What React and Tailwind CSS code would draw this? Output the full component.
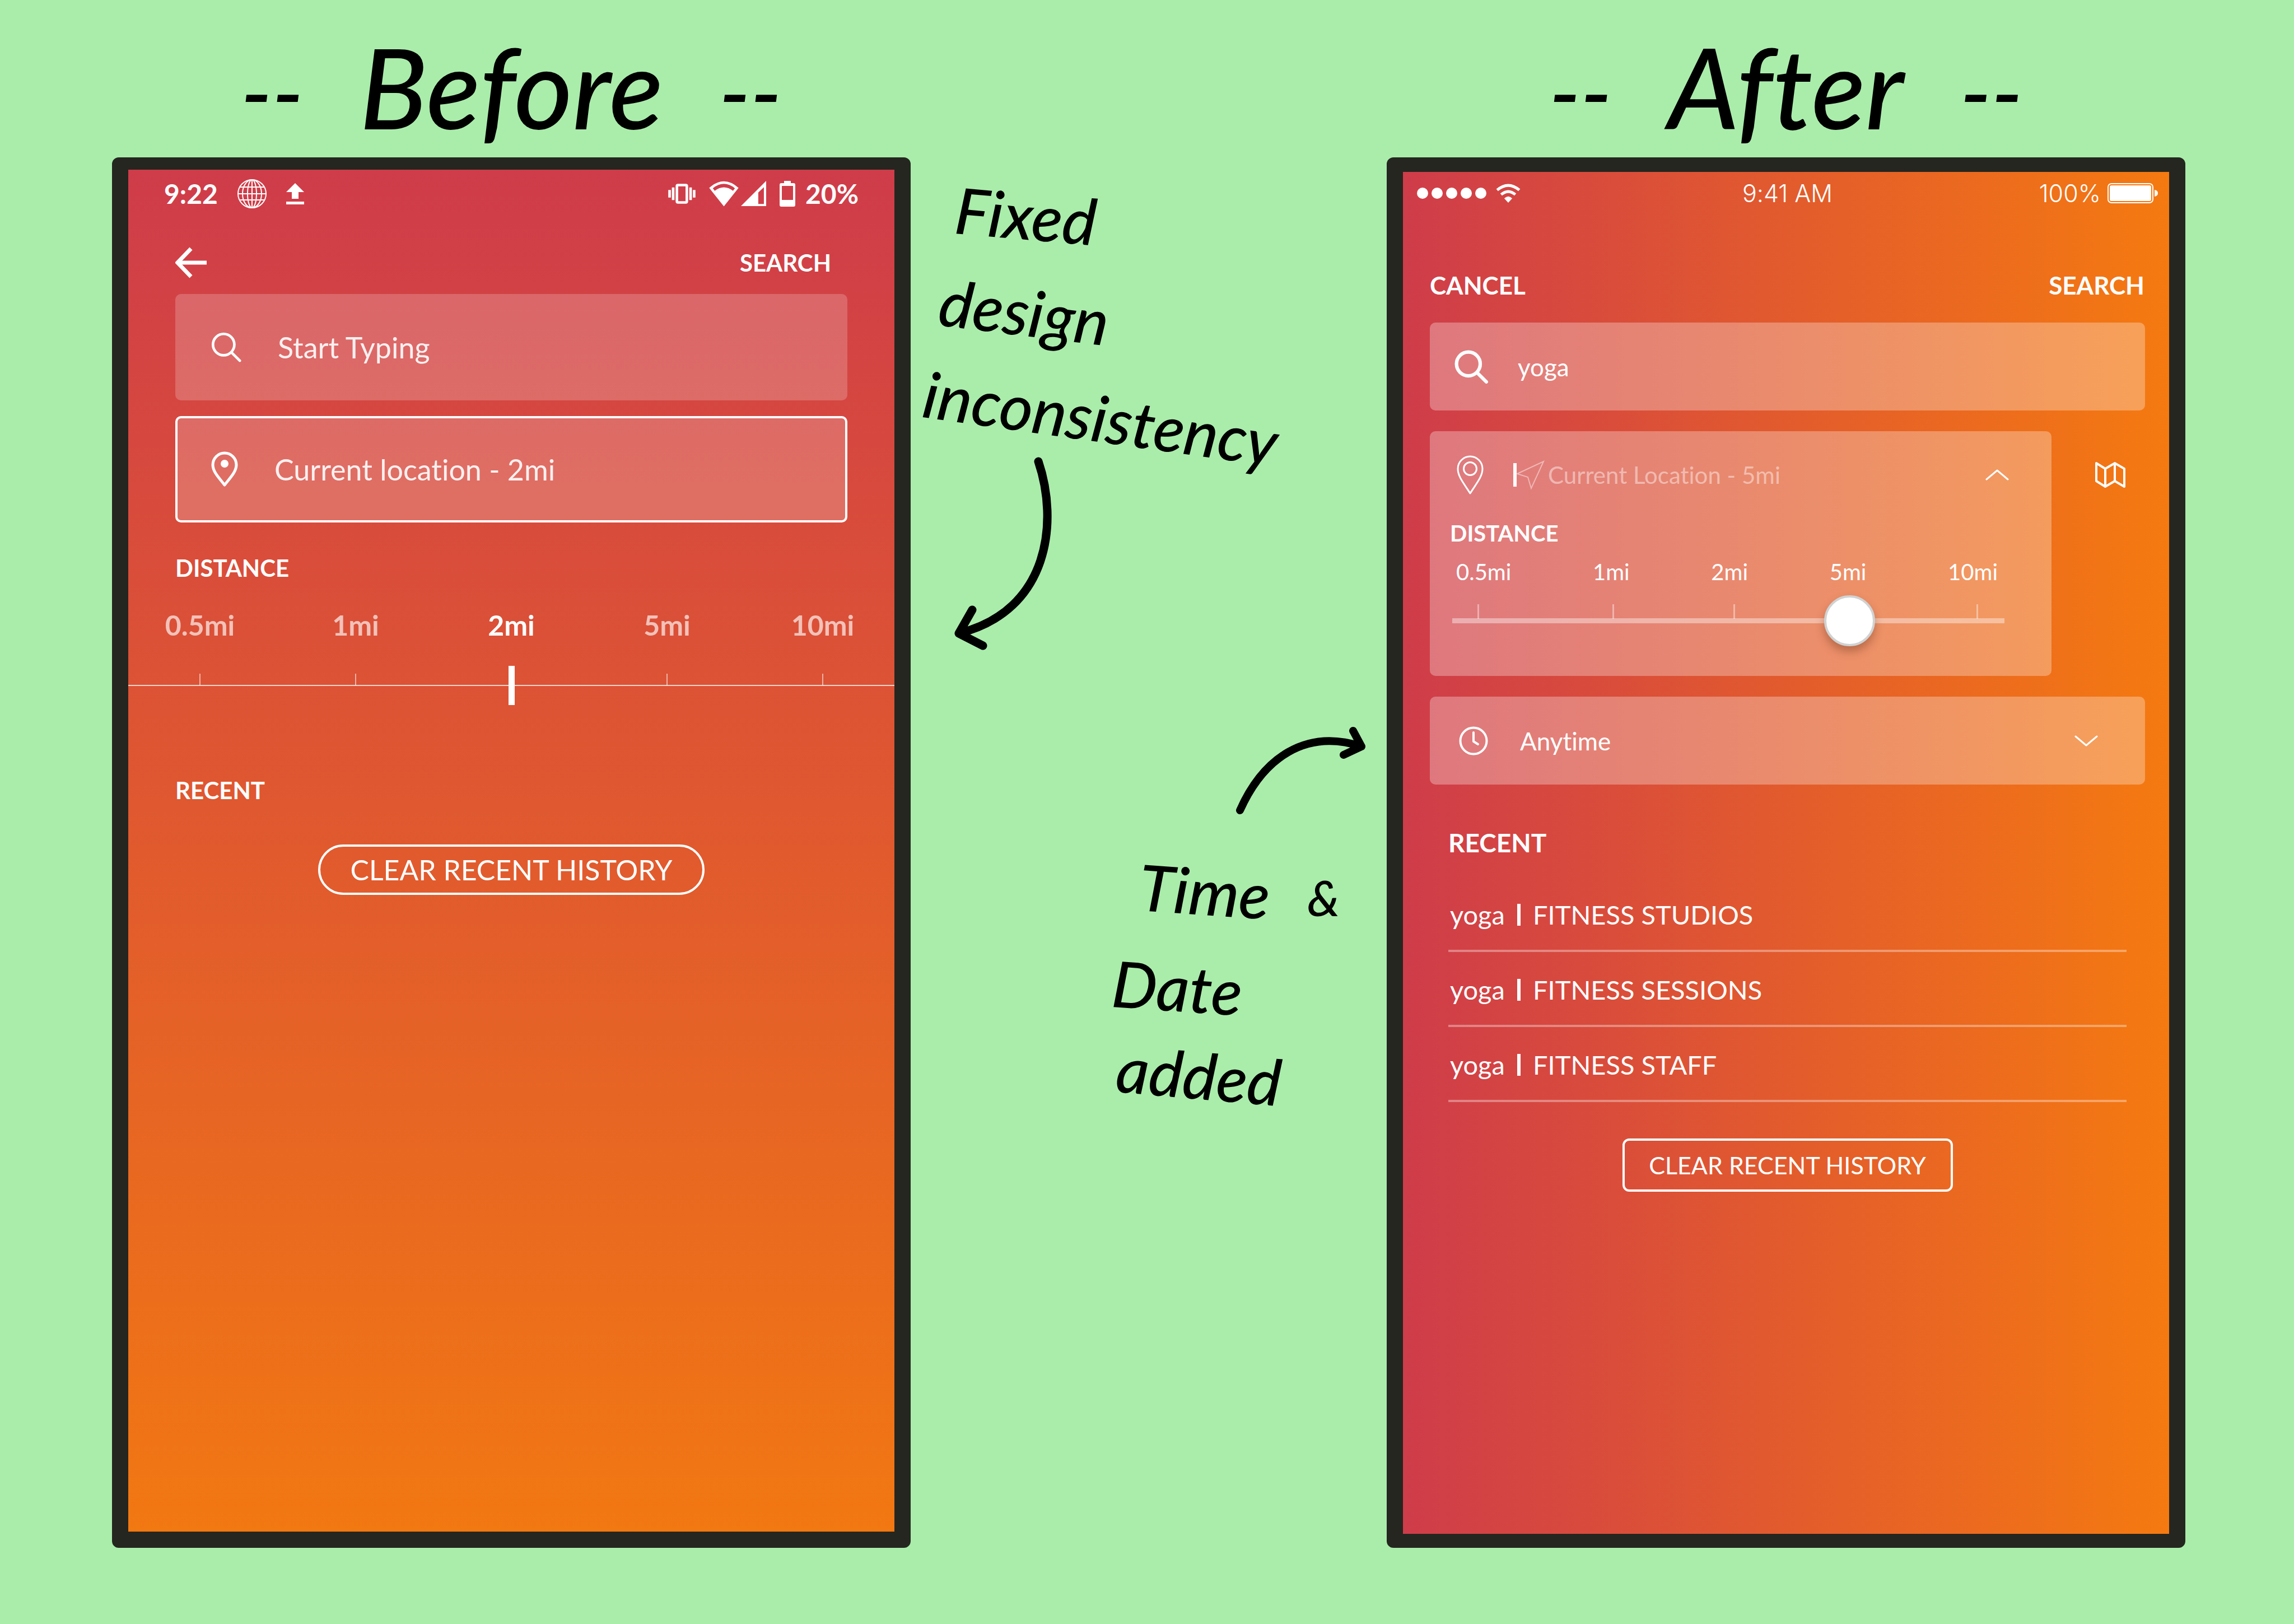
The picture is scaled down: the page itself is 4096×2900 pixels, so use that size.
import React from "react";

const LATO = "font-['Lato','Open_Sans',sans-serif]";

/* ---------- icons ---------- */

function Icon({ box, className, children, width = 4 }) {
  return (
    <svg
      viewBox={box}
      className={`shrink-0 ${className}`}
      fill="none"
      stroke="currentColor"
      strokeWidth={width}
      strokeLinecap="round"
      strokeLinejoin="round"
      aria-hidden="true"
    >
      {children}
    </svg>
  );
}

const Globe = () => (
  <Icon box="0 0 54 54" className="h-[54px] w-[54px]" width={2}>
    <circle cx="27" cy="27" r="25" />
    <ellipse cx="27" cy="27" rx="17" ry="25" />
    <ellipse cx="27" cy="27" rx="8" ry="25" />
    <path d="M27 2v50M2 27h50M6 15h42M6 38h42" />
  </Icon>
);

const Upload = () => (
  <svg viewBox="0 0 32 38" className="h-[38px] w-8 shrink-0" fill="currentColor" aria-hidden="true">
    <path d="M16 0 32 16H22V28H10V16H0ZM0 33H32V38H0Z" />
  </svg>
);

const Vibrate = () => (
  <Icon box="0 0 160 118" className="h-[36px] w-[49px]" width={15}>
    <rect x="51" y="8" width="58" height="102" rx="6" />
    <path d="M29 22V96M131 22V96M8 37V81M152 37V81" strokeLinecap="butt" />
  </Icon>
);

const WifiFan = () => (
  <svg viewBox="0 0 172 148" className="h-[46px] w-[53px]" fill="currentColor" aria-hidden="true">
    <path fillRule="evenodd" d="M1 40Q86-36 171 40L86 147ZM22 42 33 57Q86 17 139 57L150 42Q86-9 22 42Z" />
  </svg>
);

const Signal = () => (
  <svg viewBox="0 0 144 144" className="h-[45px] w-[45px]" fill="currentColor" aria-hidden="true">
    <path fillRule="evenodd" d="M144 0V144H0ZM131 36 99 66V132H131Z" />
  </svg>
);

const BatteryUpright = () => (
  <svg viewBox="0 0 28 46" className="h-[46px] w-7 shrink-0" fill="currentColor" aria-hidden="true">
    <path fillRule="evenodd" d="M8 0H20V4H25Q28 4 28 7V43Q28 46 25 46H3Q0 46 0 43V7Q0 4 3 4H8ZM4 9V34H24V9Z" />
  </svg>
);

const BackArrow = () => (
  <Icon box="0 0 56 56" className="h-14 w-14" width={7}>
    <path d="M28 3 4 28 28 53M5 28H56" strokeLinecap="butt" strokeLinejoin="miter" />
  </Icon>
);

const Search = ({ className, width }) => (
  <Icon box="0 0 58 58" className={className} width={width}>
    <circle cx="24" cy="24" r="20.5" />
    <path d="M39 39 55 55" />
  </Icon>
);

const PinDot = () => (
  <Icon box="0 0 48 64" className="h-16 w-12" width={5}>
    <path d="M24 60C13 46 3 36 3 24a21 21 0 0 1 42 0C45 36 35 46 24 60Z" />
    <circle cx="24" cy="22" r="7" fill="currentColor" stroke="none" />
  </Icon>
);

const PinRing = () => (
  <Icon box="0 0 60 70" className="h-[70px] w-[60px]" width={3}>
    <path d="M30 68C18 49 8 38 8 24a22 22 0 0 1 44 0C52 38 42 49 30 68Z" />
    <circle cx="30" cy="24" r="11.5" />
  </Icon>
);

const LocationArrow = () => (
  <Icon box="0 0 52 54" className="h-[54px] w-[52px] text-white/45" width={2}>
    <path d="M48 3 26 51 20 31 1 25Z" strokeLinejoin="miter" />
  </Icon>
);

const Chevron = ({ up }) => (
  <Icon box="0 0 42 22" className="pointer-events-none h-[22px] w-[42px]" width={3}>
    <path d={up ? "M2 19 21 3 40 19" : "M2 3 21 19 40 3"} />
  </Icon>
);

const MapFold = () => (
  <Icon box="0 0 54 46" className="h-[46px] w-[54px]" width={4}>
    <path d="M2 2 18 12 35 2 52 12V44L35 34 18 44 2 34ZM18 12V44M35 2V34" />
  </Icon>
);

const Clock = () => (
  <Icon box="0 0 60 52" className="h-[52px] w-[60px]" width={4}>
    <circle cx="30" cy="26" r="23.5" />
    <path d="M30 11V27L38 32" />
  </Icon>
);

const WifiArcs = () => (
  <svg viewBox="0 0 142 110" className="h-[34px] w-[44px]" aria-hidden="true">
    <path d="M7 37Q71-17 135 37M30 63Q71 28 112 63" fill="none" stroke="currentColor" strokeWidth="16" />
    <path d="M71 110 48 85Q71 62 94 85Z" fill="currentColor" />
  </svg>
);

const BatteryFull = () => (
  <svg viewBox="0 0 90 36" className="h-9 w-[90px]" aria-hidden="true">
    <rect x="1" y="1" width="80" height="34" rx="6" fill="none" stroke="currentColor" strokeWidth="2" />
    <rect x="4" y="4" width="74" height="28" rx="3" fill="currentColor" />
    <path d="M84 12Q90 13 90 18T84 24Z" fill="currentColor" />
  </svg>
);

/* ---------- left phone ---------- */

function BeforePhone() {
  const marks = ["0.5mi", "1mi", "2mi", "5mi", "10mi"];
  return (
    <section className="rounded-xl border-x-[29px] border-t-[22px] border-b-[29px] border-[#25261f] bg-linear-to-b/srgb from-[#cf3c4a] to-[#f27812] text-white">
      <div className="flex h-[86px] items-center justify-between px-[64px] text-[48px] leading-[60px] font-bold">
        <div className="flex items-center gap-[34px]">
          <span>9:22</span>
          <Globe />
          <Upload />
        </div>
        <div className="flex items-center gap-[24px]">
          <Vibrate />
          <span className="flex gap-[4px]">
            <WifiFan />
            <Signal />
          </span>
          <span className="flex items-center gap-[18px]">
            <BatteryUpright />
            20%
          </span>
        </div>
      </div>

      <header className="mt-[50px] flex h-[60px] items-center justify-between pr-[113px] pl-[84px]">
        <button type="button" aria-label="Back">
          <BackArrow />
        </button>
        <button type="button" className="text-[42px] leading-[60px] font-bold">SEARCH</button>
      </header>

      <div className="mt-[26px] flex flex-col gap-[28px] px-[84px]">
        <label className="flex h-[190px] items-center gap-[65px] rounded-[10px] bg-white/20 pl-[64px]">
          <Search className="h-[54px] w-[54px]" width={5} />
          <input
            aria-label="Search"
            placeholder="Start Typing"
            className="min-w-0 flex-1 bg-transparent text-[52px] leading-[60px] outline-none placeholder:text-white/90"
          />
        </label>
        <label className="flex h-[190px] items-center gap-[65px] rounded-[10px] border-4 border-white bg-white/20 pl-[60px]">
          <PinDot />
          <input
            aria-label="Location"
            placeholder="Current location - 2mi"
            className="min-w-0 flex-1 bg-transparent text-[52px] leading-[60px] outline-none placeholder:text-white/90"
          />
        </label>
      </div>

      <h2 className="mt-[51px] px-[84px] text-[42px] leading-[60px] font-bold">DISTANCE</h2>
      <div className="mt-[42px] flex justify-between px-[60px] text-[50px] leading-[60px] font-bold">
        {marks.map((m) => (
          <span key={m} className={m === "2mi" ? "w-[136px] text-center" : "w-[136px] text-center text-white/65"}>
            {m}
          </span>
        ))}
      </div>
      <div className="mt-[43px] grid h-[70px]">
        <div className="col-start-1 row-start-1 flex justify-between px-[127px] pt-[14px]">
          {marks.map((m) => (
            <span key={m} className={m === "2mi" ? "h-[21px] w-[2px]" : "h-[21px] w-[2px] bg-white/55"} />
          ))}
        </div>
        <input
          type="range"
          min="0"
          max="4"
          defaultValue="2"
          aria-label="Distance"
          className="col-start-1 row-start-1 h-[70px] w-full appearance-none bg-transparent [&::-webkit-slider-runnable-track]:h-[2px] [&::-webkit-slider-runnable-track]:bg-white/75 [&::-webkit-slider-thumb]:-mt-[34px] [&::-webkit-slider-thumb]:h-[70px] [&::-webkit-slider-thumb]:w-[11px] [&::-webkit-slider-thumb]:appearance-none [&::-webkit-slider-thumb]:bg-white"
        />
      </div>

      <h2 className="mt-[122px] px-[84px] text-[42px] leading-[60px] font-bold">RECENT</h2>
      <div className="mt-[67px] flex justify-center">
        <button type="button" className="h-[90px] w-[690px] rounded-full border-4 border-white text-[50px] leading-[60px]">
          CLEAR RECENT HISTORY
        </button>
      </div>
    </section>
  );
}

/* ---------- right phone ---------- */

function AfterPhone() {
  const recent = ["FITNESS STUDIOS", "FITNESS SESSIONS", "FITNESS STAFF"];
  return (
    <section className="rounded-xl border-x-[29px] border-t-[26px] border-b-[25px] border-[#25261f] bg-linear-to-r/srgb from-[#cf3c4a] to-[#f57a10] text-white">
      <div className="grid h-[76px] grid-cols-3 items-center pr-[20px] pl-[25px] font-['Inter','Roboto',sans-serif] text-[43px] leading-[60px] font-light">
        <div className="flex items-center gap-[17px]">
          <span className="flex gap-[6px]">
            {[0, 1, 2, 3, 4].map((d) => (
              <span key={d} className="h-[20px] w-[20px] rounded-full bg-white" />
            ))}
          </span>
          <WifiArcs />
        </div>
        <span className="text-center">9:41 AM</span>
        <div className="flex items-center justify-end gap-[12px]">
          100%
          <BatteryFull />
        </div>
      </div>

      <header className="mt-[96px] flex justify-between pr-[44px] pl-[48px] text-[44px] leading-[60px] font-bold">
        <button type="button">CANCEL</button>
        <button type="button">SEARCH</button>
      </header>

      <div className="mt-[37px] flex flex-col gap-[37px] pr-[43px] pl-[48px] text-[44px] leading-[60px]">
        <label className="flex h-[157px] items-center gap-[53px] rounded-[10px] bg-white/30 pl-[44px]">
          <Search className="h-[60px] w-[60px]" width={6} />
          <input aria-label="Search" defaultValue="yoga" className="min-w-0 flex-1 bg-transparent outline-none" />
        </label>

        <div className="flex">
          <div className="flex-1 rounded-[10px] bg-white/30 pb-[53px]">
            <div className="flex h-[156px] items-center pr-[76px] pl-[42px]">
              <PinRing />
              <span className="ml-[47px] h-[42px] w-[6px] bg-white" />
              <LocationArrow />
              <input
                aria-label="Location"
                placeholder="Current Location - 5mi"
                className="ml-[4px] min-w-0 flex-1 bg-transparent text-[42px] outline-none placeholder:text-white/45"
              />
              <button type="button" aria-label="Collapse location">
                <Chevron up />
              </button>
            </div>
            <h2 className="pl-[36px] text-[40px] leading-[52px] font-bold">DISTANCE</h2>
            <div className="mt-[17px] flex justify-between pr-[96px] pl-[47px] text-[40px] leading-[52px]">
              {["0.5mi", "1mi", "2mi", "5mi", "10mi"].map((m) => (
                <span key={m}>{m}</span>
              ))}
            </div>
            <div className="mt-[16px] mr-[84px] ml-[40px] grid h-[91px]">
              <div className="col-start-1 row-start-1 grid h-[42px] grid-cols-[45fr_241fr_215fr_434fr_50fr] pt-[16px]">
                <span />
                <span className="border-l-[3px] border-white/40" />
                <span className="border-l-[3px] border-white/40" />
                <span className="border-l-[3px] border-white/40" />
                <span className="border-l-[3px] border-white/40" />
              </div>
              <input
                type="range"
                min="0"
                max="1000"
                defaultValue="742"
                aria-label="Distance"
                className="col-start-1 row-start-1 h-[91px] w-full appearance-none bg-transparent [&::-webkit-slider-runnable-track]:h-[9px] [&::-webkit-slider-runnable-track]:bg-white/40 [&::-webkit-slider-thumb]:-mt-[41px] [&::-webkit-slider-thumb]:h-[91px] [&::-webkit-slider-thumb]:w-[91px] [&::-webkit-slider-thumb]:appearance-none [&::-webkit-slider-thumb]:rounded-full [&::-webkit-slider-thumb]:border-4 [&::-webkit-slider-thumb]:border-[#d0d2d2] [&::-webkit-slider-thumb]:bg-white [&::-webkit-slider-thumb]:shadow-[0_10px_16px_rgba(90,40,20,0.35)]"
              />
            </div>
          </div>
          <button type="button" aria-label="Open map" className="flex h-[156px] w-[167px] items-center justify-end pr-[35px]">
            <MapFold />
          </button>
        </div>

        <label className="flex h-[157px] items-center gap-[53px] rounded-[10px] bg-white/30 pr-[84px] pl-[48px]">
          <Clock />
          <select aria-label="Time" className="min-w-0 flex-1 appearance-none bg-transparent outline-none">
            <option>Anytime</option>
          </select>
          <Chevron />
        </label>
      </div>

      <div className="mt-[74px] pr-[76px] pl-[81px]">
        <h2 className="text-[46px] leading-[60px] font-bold">RECENT</h2>
        <ul className="mt-[31px] text-[47px] leading-[60px]">
          {recent.map((r) => (
            <li key={r} className="border-b-4 border-white/35 pt-[37px] pb-[33px]">
              <a href="#recent" className="flex items-center gap-[22px] pl-[3px]">
                <span>yoga</span>
                <span className="h-[39px] w-[6px] bg-white" />
                <span>{r}</span>
              </a>
            </li>
          ))}
        </ul>
        <div className="mt-[65px] flex justify-center">
          <button type="button" className="h-[95px] w-[590px] rounded-xl border-4 border-white text-[43px] leading-[60px]">
            CLEAR RECENT HISTORY
          </button>
        </div>
      </div>
    </section>
  );
}

/* ---------- annotations ---------- */

function Notes() {
  return (
    <aside className="pt-[10px] text-[114px] font-medium text-black italic">
      <p className="leading-[164px]">
        <span className="ml-[80px] block origin-left rotate-5">Fixed</span>
        <span className="ml-[52px] block origin-left rotate-7">design</span>
        <span className="ml-[24px] block origin-left rotate-8">inconsistency</span>
      </p>
      <svg viewBox="0 0 190 360" className="mt-[27px] ml-[74px] h-[360px] w-[190px]" fill="none" stroke="currentColor" strokeWidth="15" strokeLinecap="round" strokeLinejoin="round" aria-hidden="true">
        <path d="M154 14C190 120 175 280 12 321M36 279 12 321 55 343" />
      </svg>
      <svg viewBox="0 0 245 170" className="mt-[120px] ml-[574px] h-[170px] w-[245px]" fill="none" stroke="currentColor" strokeWidth="14" strokeLinecap="round" strokeLinejoin="round" aria-hidden="true">
        <path d="M14 157C55 65 130 10 231 43M216 15 231 43 199 58" />
      </svg>
      <p className="mt-[42px] leading-[152px]">
        <span className="ml-[408px] flex items-center gap-[66px]">
          <span className="rotate-4">Time</span>
          <span className="pt-[24px] text-[88px]">&amp;</span>
        </span>
        <span className="ml-[360px] block origin-left rotate-4">Date</span>
        <span className="ml-[368px] block origin-left rotate-5">added</span>
      </p>
    </aside>
  );
}

function Title({ children }) {
  return (
    <h1 className="flex items-center justify-center gap-[100px] text-[200px] leading-[240px] font-medium text-black italic">
      <span className="pt-[16px] text-[160px]">--</span>
      <span>{children}</span>
      <span className="pt-[16px] text-[160px]">--</span>
    </h1>
  );
}

export default function App() {
  return (
    <main
      className={`grid min-h-screen grid-cols-[200fr_1426fr_850fr_1426fr_194fr] grid-rows-[281px_1fr] bg-[#aaedab] pb-[136px] [font-variant-ligatures:none] ${LATO}`}
    >
      <div className="col-start-2 flex items-start justify-center pt-[26px]">
        <Title>Before</Title>
      </div>
      <div className="col-start-4 flex items-start justify-center pt-[26px]">
        <Title>After</Title>
      </div>
      <div className="col-start-2 row-start-2 grid">
        <BeforePhone />
      </div>
      <div className="col-start-3 row-start-2">
        <Notes />
      </div>
      <div className="col-start-4 row-start-2 grid">
        <AfterPhone />
      </div>
    </main>
  );
}
